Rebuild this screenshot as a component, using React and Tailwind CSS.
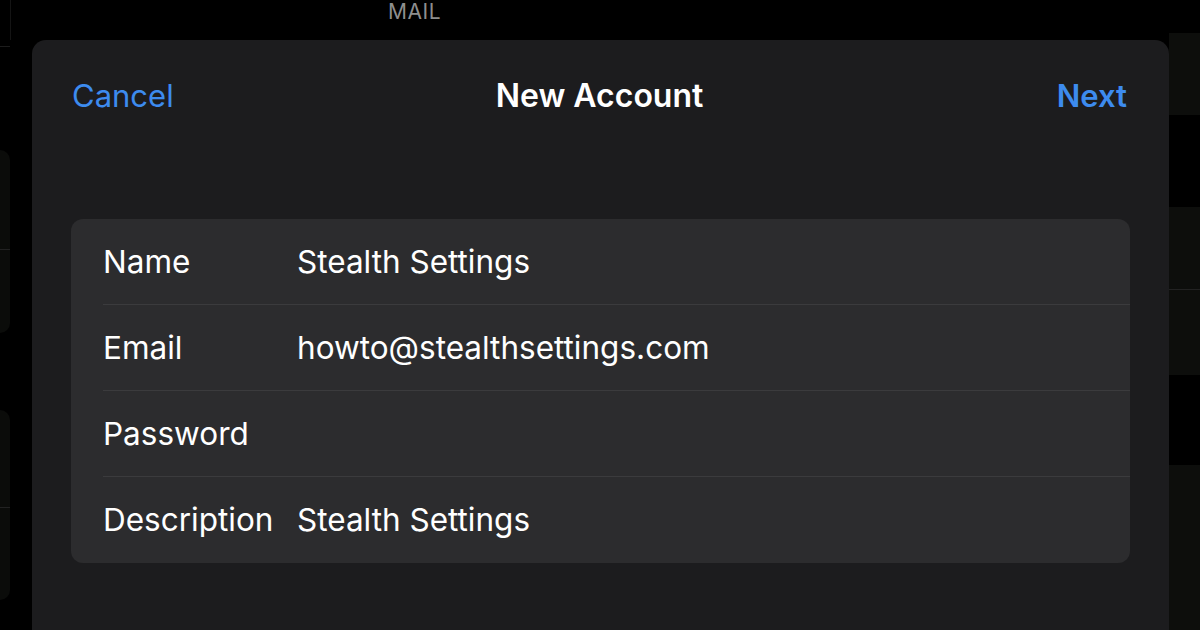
import React from "react";

const FIELDS = [
  { label: "Name", value: "Stealth Settings" },
  { label: "Email", value: "howto@stealthsettings.com" },
  { label: "Password", value: "" },
  { label: "Description", value: "Stealth Settings" },
];

export default function App() {
  return (
    <div
      className="relative w-[1200px] h-[630px] bg-black overflow-hidden"
      style={{ fontFamily: "Inter, 'Noto Sans', sans-serif" }}
    >
      {/* mail page behind the sheet */}
      <div className="flex h-full">
        <div className="w-[10px] flex flex-col">
          <div className="h-[47px] border-b border-[#1c1c1c]" />
          <div className="mt-[103px] h-[183px] rounded-r-[10px] bg-[#0b0c0a] flex flex-col">
            <div className="h-[100px] border-b border-[#222]" />
          </div>
          <div className="mt-[77px] h-[190px] rounded-r-[10px] bg-[#0b0c0a] flex flex-col">
            <div className="h-[98px] border-b border-[#222]" />
          </div>
        </div>
        <div className="flex-1 pl-[377px] pt-[2px] border-l border-[#141414] h-[40px]">
          <div className="text-[21px] leading-[20px] text-[#8e8e8e] tracking-wide">MAIL</div>
        </div>
        <div className="w-[31px] flex flex-col">
          <div className="mt-[33px] h-[82px] bg-[#0d0e0c]" />
          <div className="mt-[92px] h-[83px] bg-[#0d0e0c] border-b border-[#222]" />
          <div className="h-[85px] bg-[#0d0e0c]" />
          <div className="mt-[90px] flex-1 bg-[#0d0e0c]" />
        </div>
      </div>

      {/* New Account sheet */}
      <div className="absolute left-[32px] top-[40px] w-[1137px] h-[620px] rounded-[14px] bg-[#1c1c1e]">
        <div className="grid grid-cols-3 items-center h-[112px] pl-[40px] pr-[42px]">
          <span className="text-[31px] text-[#3d8bef]">Cancel</span>
          <span className="text-[32px] font-semibold text-white text-center">New Account</span>
          <span className="text-[31px] font-semibold text-[#3d8bef] text-right">Next</span>
        </div>

        <div className="mt-[67px] mx-[39px] rounded-[12px] bg-[#2c2c2e] overflow-hidden">
          {FIELDS.map((f, i) => (
            <div key={f.label} className="pl-[32px]">
              <div
                className={`flex items-center h-[86px] text-[31.5px] text-white ${
                  i < FIELDS.length - 1 ? "border-b border-[#3b3b3d]" : ""
                }`}
              >
                <span className="w-[194px] shrink-0">{f.label}</span>
                <span>{f.value}</span>
              </div>
            </div>
          ))}
        </div>
      </div>
    </div>
  );
}
